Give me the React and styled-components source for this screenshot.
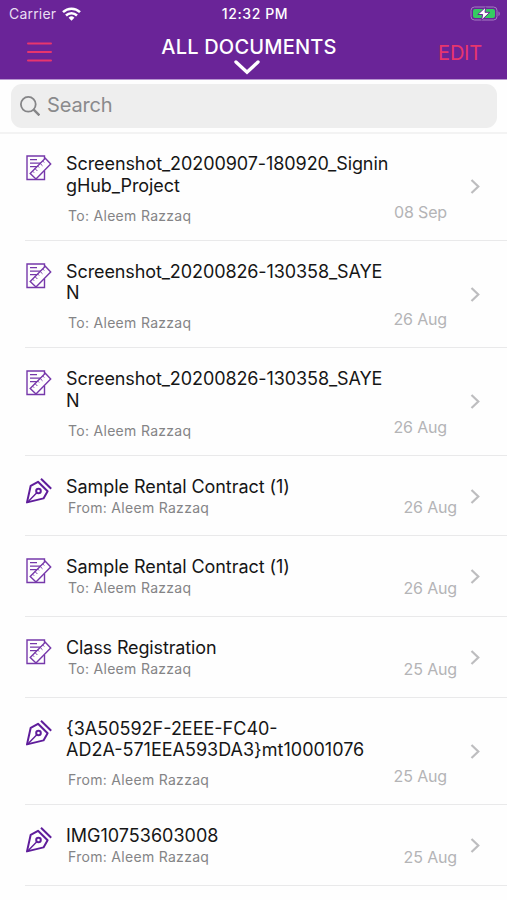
import React from "react";
import styled, { createGlobalStyle } from "styled-components";

const GlobalStyle = createGlobalStyle`
    body {
        margin: 0;
        background-color: #fefefe;
        font-family: Inter, "Liberation Sans", sans-serif;
    }
`
const StyledScreen = styled.div`
    width: 507px;
    height: 900px;
    overflow: hidden;
`
const StyledHeader = styled.header`
    height: 80px;
    background-color: #6a2498;
    border-bottom: 1px solid #b897d0;
    box-sizing: border-box;
`
const StyledStatusBar = styled.div`
    display: grid;
    grid-template-columns: 1fr auto 1fr;
    align-items: center;
    height: 27px;
    padding: 0 6px 0 9px;
    color: #e9def2;
    font-size: 14px;
    line-height: 27px;
`
const StyledCarrier = styled.div`
    display: flex;
    align-items: center;
    gap: 6px;
    letter-spacing: 0.2px;
`
const StyledTime = styled.div`
    color: #fff;
    font-weight: 500;
    letter-spacing: 0.6px;
`
const StyledBattery = styled.div`
    display: flex;
    justify-content: flex-end;
`
const StyledNavBar = styled.nav`
    display: grid;
    grid-template-columns: 1fr auto 1fr;
    height: 50px;
    padding: 0 25px 0 26px;
`
const StyledMenuButton = styled.button`
    justify-self: start;
    align-self: center;
    display: flex;
    padding: 0;
    border: 0;
    background: none;
`
const StyledHeading = styled.h1`
    display: flex;
    flex-direction: column;
    align-items: center;
    margin: 0;
    padding: 8px 10px 0 0;
    color: #fff;
    font-size: 20px;
    font-weight: 500;
    line-height: 24px;
    letter-spacing: 0.2px;
    white-space: nowrap;

    svg {
        margin: 0 3px 0 0;
    }
`
const StyledEdit = styled.button`
    justify-self: end;
    align-self: center;
    padding: 2px 0 0;
    border: 0;
    background: none;
    color: #e8356d;
    font-family: inherit;
    font-size: 20px;
    line-height: 24px;
    letter-spacing: -0.2px;
`
const StyledSearchArea = styled.div`
    height: 54px;
    padding: 4px 10px 5px 11px;
    border-bottom: 2px solid #f3f3f3;
    box-sizing: border-box;
`
const StyledSearch = styled.div`
    display: flex;
    align-items: center;
    gap: 7px;
    height: 44px;
    padding-left: 9px;
    border-radius: 11px;
    background-color: #eee;
    color: #8a8a8c;
    font-size: 20px;
    line-height: 43px;
    letter-spacing: -0.15px;

    span {
        height: 44px;
    }
`
const StyledList = styled.ul`
    margin: -1px 0 0;
    padding: 0;
    list-style: none;
`
const StyledRow = styled.li`
    display: flex;
    height: ${(props) => (props.$tall ? "107.6px" : "80.6px")};
    margin-left: 25px;
    border-bottom: 1px solid #e9e9ea;
    box-sizing: border-box;
`
const StyledIcon = styled.div`
    width: 41px;
    padding-top: 21px;
`
const StyledText = styled.div`
    flex: 1;
    min-width: 0;
    padding-top: 20px;
`
const StyledTitle = styled.div`
    color: #161616;
    font-size: 18px;
    line-height: 21.6px;
    letter-spacing: ${(props) => props.$spacing || 0}px;
    white-space: pre;
`
const StyledPerson = styled.div`
    margin-top: ${(props) => (props.$tall ? "8.4px" : "-0.6px")};
    padding-left: 2px;
    color: #848486;
    font-size: 14px;
    line-height: 21px;
    letter-spacing: 0.3px;
`
const StyledDate = styled.div`
    align-self: flex-end;
    padding: ${(props) => (props.$tall ? "0 23px 18px 0" : "0 13px 18px 0")};
    color: #b4b4b6;
    font-size: 16px;
    line-height: 20px;
    letter-spacing: -0.15px;
    white-space: nowrap;
`
const StyledArrow = styled.div`
    display: flex;
    align-items: center;
    width: 37px;
`

const WifiIcon = () => (
    <svg width="19" height="14" viewBox="0 0 19 14" fill="none" stroke="#fff" strokeWidth="2.5">
        <path d="M1 5.2a12.2 12.2 0 0 1 17 0" />
        <path d="M4 8.5a7.9 7.9 0 0 1 11 0" />
        <path d="M6.6 10.8a4.1 4.1 0 0 1 5.8 0L9.5 13.8z" fill="#fff" stroke="none" />
    </svg>
)

const BatteryIcon = () => (
    <svg width="31" height="16" viewBox="0 0 31 16">
        <rect x="1" y="1" width="26" height="13" rx="3.5" fill="none" stroke="#a57cc3" />
        <rect x="3" y="3" width="22" height="9" rx="2" fill="#35cb62" />
        <path d="M28.5 5.5V10c1.6-.6 1.6-3.9 0-4.5z" fill="#a57cc3" />
        <path d="M15.8 1L7.8 8.500h4.800L11.600 14.200l8.200-7.900h-4.800z" fill="#fff" stroke="#6a2498" />
    </svg>
)

const MenuIcon = () => (
    <svg width="26" height="22" viewBox="0 0 26 22" stroke="#e8356d" strokeWidth="2" strokeLinecap="round">
        <path d="M2 2.500h23M2 11h23M2 19.500h23" />
    </svg>
)

const DownIcon = () => (
    <svg width="28" height="17" viewBox="0 0 28 17" fill="none" stroke="#fff" strokeWidth="3.4" strokeLinecap="round">
        <path d="M3 3L14 13.200 25 3" />
    </svg>
)

const SearchIcon = () => (
    <svg width="20" height="20" viewBox="0 0 20 20" fill="none" stroke="#858587" strokeWidth="1.8">
        <circle cx="8.3" cy="8.3" r="7.4" />
        <path d="M13.400 13.400l6 6" strokeWidth="2.4" />
    </svg>
)

const DraftIcon = () => (
    <svg width="28" height="28" viewBox="0 0 28 28" fill="none" stroke="#7638aa" strokeWidth="1.4">
        <path d="M19.500 5V2H2v23.500h17.500V17" />
        <path d="M5 5.700h7M5 9.200h11M5 12.700h8" strokeWidth="1.2" />
        <path d="M20.300 4.300l5.400 5.600L11 25l-5.800-5.500z" fill="#fefefe" />
        <path d="M17.700 7l1.500 1.500M15.200 9.500l2.300 2.300M12.600 12l1.500 1.500M10.100 14.700l2.300 2.300M7.600 17.200l1.500 1.500" strokeWidth="1" />
    </svg>
)

const PenIcon = () => (
    <svg width="28" height="28" viewBox="0 0 28 28" fill="none" stroke="#5f1d9b" strokeWidth="2">
        <path d="M16 1.700l10.200 10" />
        <path d="M13 4.800l9.600 9.400-4.100 7.200-16.500 4L5.700 8.800z" strokeLinejoin="round" />
        <circle cx="13.500" cy="14" r="2.300" />
        <path d="M11.800 15.700L2.500 25.300" strokeWidth="1.4" />
    </svg>
)

const RightIcon = () => (
    <svg width="11" height="16" viewBox="0 0 11 16" fill="none" stroke="#bdbdbf" strokeWidth="2.2">
        <path d="M1.500 2L8.300 8.500l-6.800 6.500" />
    </svg>
)

const documents = [
    { title: "Screenshot_20200907-180920_Signin\ngHub_Project", person: "To: Aleem Razzaq", date: "08 Sep", tall: true, spacing: -0.08 },
    { title: "Screenshot_20200826-130358_SAYE\nN", person: "To: Aleem Razzaq", date: "26 Aug", tall: true, spacing: -0.1 },
    { title: "Screenshot_20200826-130358_SAYE\nN", person: "To: Aleem Razzaq", date: "26 Aug", tall: true, spacing: -0.1 },
    { title: "Sample Rental Contract (1)", person: "From: Aleem Razzaq", date: "26 Aug", sign: true, spacing: -0.06 },
    { title: "Sample Rental Contract (1)", person: "To: Aleem Razzaq", date: "26 Aug", spacing: -0.06 },
    { title: "Class Registration", person: "To: Aleem Razzaq", date: "25 Aug", spacing: -0.13 },
    { title: "{3A50592F-2EEE-FC40-\nAD2A-571EEA593DA3}mt10001076", person: "From: Aleem Razzaq", date: "25 Aug", tall: true, sign: true },
    { title: "IMG10753603008", person: "From: Aleem Razzaq", date: "25 Aug", sign: true },
]

const DocumentRow = ({ item }) => (
    <StyledRow $tall={item.tall}>
        <StyledIcon>{item.sign ? <PenIcon /> : <DraftIcon />}</StyledIcon>
        <StyledText>
            <StyledTitle $spacing={item.spacing}>{item.title}</StyledTitle>
            <StyledPerson $tall={item.tall}>{item.person}</StyledPerson>
        </StyledText>
        <StyledDate $tall={item.tall}>{item.date}</StyledDate>
        <StyledArrow>
            <RightIcon />
        </StyledArrow>
    </StyledRow>
)

const App = () => {
    return (
        <StyledScreen>
            <GlobalStyle />
            <StyledHeader>
                <StyledStatusBar>
                    <StyledCarrier>
                        Carrier
                        <WifiIcon />
                    </StyledCarrier>
                    <StyledTime>12:32 PM</StyledTime>
                    <StyledBattery>
                        <BatteryIcon />
                    </StyledBattery>
                </StyledStatusBar>
                <StyledNavBar>
                    <StyledMenuButton aria-label="Menu">
                        <MenuIcon />
                    </StyledMenuButton>
                    <StyledHeading>
                        ALL DOCUMENTS
                        <DownIcon />
                    </StyledHeading>
                    <StyledEdit>EDIT</StyledEdit>
                </StyledNavBar>
            </StyledHeader>
            <StyledSearchArea>
                <StyledSearch>
                    <SearchIcon />
                    <span>Search</span>
                </StyledSearch>
            </StyledSearchArea>
            <StyledList>
                {documents.map((item, index) => {
                    return <DocumentRow key={index} item={item} />
                })}
            </StyledList>
        </StyledScreen>
    )
}

export default App
